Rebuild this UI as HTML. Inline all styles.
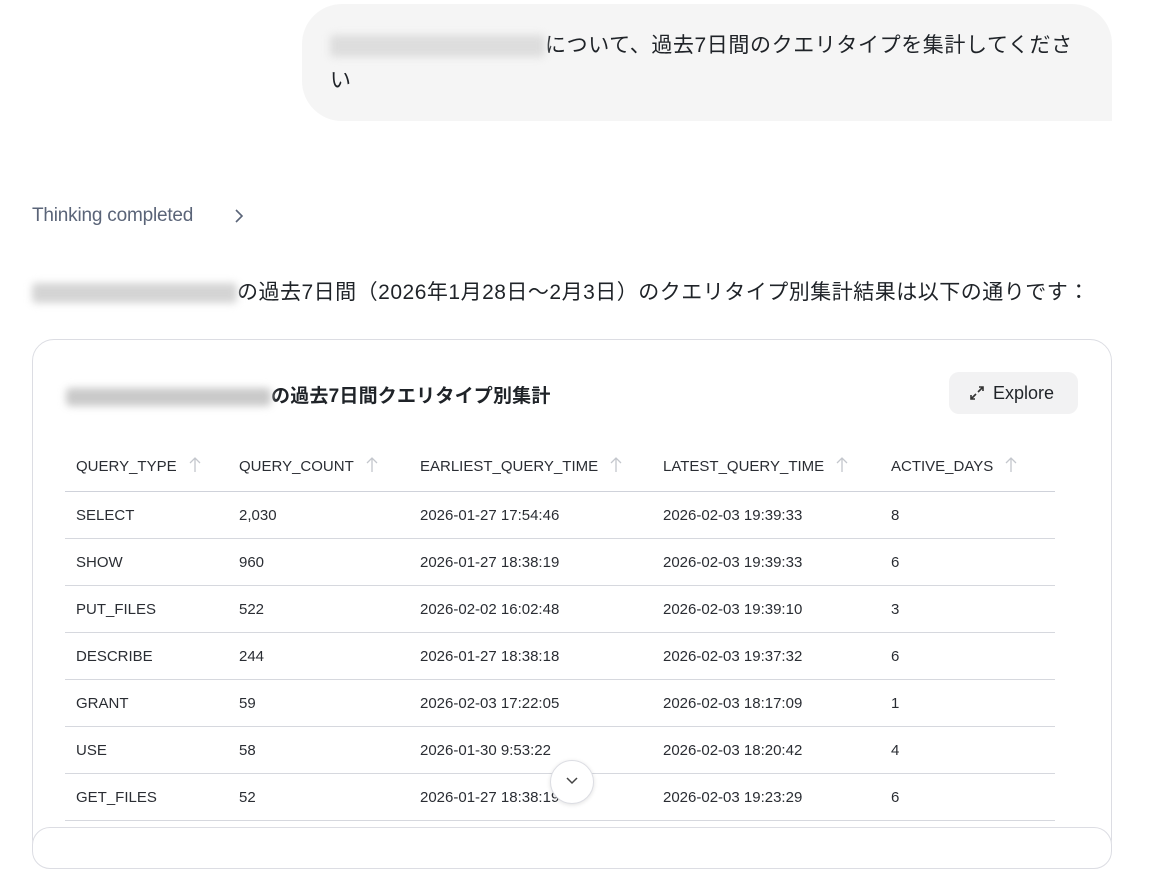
<!DOCTYPE html>
<html><head><meta charset="utf-8"><style>
body{margin:0;width:1154px;height:837px;overflow:hidden;background:#fff;font-family:"Liberation Sans","Noto Sans CJK JP",sans-serif;color:#1f2328;position:relative}
.abs{position:absolute}
.blur{display:inline-block;background:#c9c9c9;filter:blur(4px);border-radius:4px;vertical-align:middle}
.bubble{left:302px;top:4px;width:810px;height:117px;background:#f5f5f5;border-radius:40px 40px 0 40px}
.card{left:32px;top:339px;width:1078px;height:520px;border:1px solid #dcdde3;border-radius:22px}
th,td{text-align:left;font-weight:normal;font-size:15px;color:#2a2d33;padding:0 0 0 11px}
table{border-collapse:collapse;position:absolute;left:65px;top:440px;width:990px}
th{height:51px;border-bottom:1px solid #cfd2da}
td{height:46px;border-bottom:1px solid #d6d8de}
.ar{display:inline-block;margin-left:12px;vertical-align:-2px}
</style></head><body>
<div class="abs bubble"></div>
<div class="abs" style="left:330px;top:28px;font-size:21px;letter-spacing:.6px;line-height:35px;width:760px"><span class="blur" style="width:215px;height:22px;background:#ddd"></span>について、過去7日間のクエリタイプを集計してください</div>
<div class="abs" style="left:32px;top:205px;font-size:19px;color:#5a6478;letter-spacing:-.2px">Thinking completed</div>
<svg class="abs" style="left:234px;top:209px" width="10" height="14" viewBox="0 0 10 14" fill="none" stroke="#5a6478" stroke-width="1.6"><path d="M2 1l6 6-6 6"/></svg>
<div class="abs" style="left:32px;top:276px;font-size:21px;letter-spacing:.5px;white-space:nowrap"><span class="blur" style="width:205px;height:20px;background:#d4d4d4"></span>の過去7日間（2026年1月28日～2月3日）のクエリタイプ別集計結果は以下の通りです：</div>
<div class="abs card"></div>
<div class="abs" style="left:66px;top:381px;font-size:19px;font-weight:bold;letter-spacing:.2px"><span class="blur" style="width:205px;height:18px"></span>の過去7日間クエリタイプ別集計</div>
<div class="abs" style="left:949px;top:372px;width:129px;height:42px;background:#f2f2f3;border-radius:10px;font-size:18px;line-height:42px"><svg style="position:absolute;left:20px;top:13px" width="16" height="16" viewBox="0 0 16 16" fill="none" stroke="#333" stroke-width="1.6"><path d="M10 2h4v4M14 2l-5 5M6 14H2v-4M2 14l5-5"/></svg><span style="position:absolute;left:44px">Explore</span></div>
<table>
<tr><th style="width:152px">QUERY_TYPE<svg class="ar" width="12" height="16" viewBox="0 0 12 16" fill="none" stroke="#c4c7cd" stroke-width="1.3"><path d="M6 15V1M1 6l5-5 5 5"/></svg></th><th style="width:170px">QUERY_COUNT<svg class="ar" width="12" height="16" viewBox="0 0 12 16" fill="none" stroke="#c4c7cd" stroke-width="1.3"><path d="M6 15V1M1 6l5-5 5 5"/></svg></th><th style="width:232px">EARLIEST_QUERY_TIME<svg class="ar" width="12" height="16" viewBox="0 0 12 16" fill="none" stroke="#c4c7cd" stroke-width="1.3"><path d="M6 15V1M1 6l5-5 5 5"/></svg></th><th style="width:217px">LATEST_QUERY_TIME<svg class="ar" width="12" height="16" viewBox="0 0 12 16" fill="none" stroke="#c4c7cd" stroke-width="1.3"><path d="M6 15V1M1 6l5-5 5 5"/></svg></th><th>ACTIVE_DAYS<svg class="ar" width="12" height="16" viewBox="0 0 12 16" fill="none" stroke="#c4c7cd" stroke-width="1.3"><path d="M6 15V1M1 6l5-5 5 5"/></svg></th></tr>
<tr><td>SELECT</td><td>2,030</td><td>2026-01-27 17:54:46</td><td>2026-02-03 19:39:33</td><td>8</td></tr>
<tr><td>SHOW</td><td>960</td><td>2026-01-27 18:38:19</td><td>2026-02-03 19:39:33</td><td>6</td></tr>
<tr><td>PUT_FILES</td><td>522</td><td>2026-02-02 16:02:48</td><td>2026-02-03 19:39:10</td><td>3</td></tr>
<tr><td>DESCRIBE</td><td>244</td><td>2026-01-27 18:38:18</td><td>2026-02-03 19:37:32</td><td>6</td></tr>
<tr><td>GRANT</td><td>59</td><td>2026-02-03 17:22:05</td><td>2026-02-03 18:17:09</td><td>1</td></tr>
<tr><td>USE</td><td>58</td><td>2026-01-30 9:53:22</td><td>2026-02-03 18:20:42</td><td>4</td></tr>
<tr><td>GET_FILES</td><td>52</td><td>2026-01-27 18:38:19</td><td>2026-02-03 19:23:29</td><td>6</td></tr>
</table>
<div class="abs" style="left:550px;top:760px;width:42px;height:42px;border-radius:50%;background:#fff;border:1px solid #dcdde3;box-shadow:0 1px 4px rgba(0,0,0,.12)"><svg style="position:absolute;left:14px;top:15px" width="14" height="10" viewBox="0 0 14 10" fill="none" stroke="#444" stroke-width="1.5"><path d="M2 2l5 5 5-5"/></svg></div>
<div class="abs" style="left:32px;top:827px;width:1078px;height:40px;border:1px solid #dcdde3;border-radius:18px;background:#fff"></div>
</body></html>
